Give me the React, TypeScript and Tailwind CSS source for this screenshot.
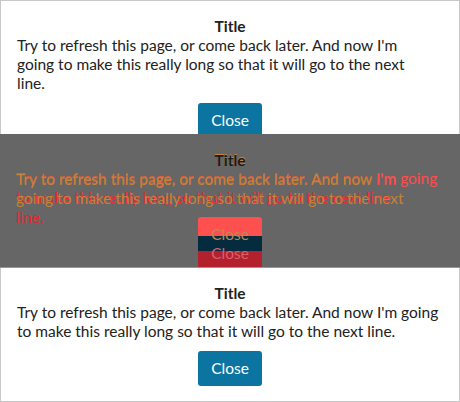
const BODY =
  "Try to refresh this page, or come back later. And now I'm going to make this really long so that it will go to the next line.";

function Panel({ narrow }: { narrow?: boolean }) {
  return (
    <>
      <p className="text-center font-bold leading-[19px]">Title</p>
      <div className={narrow ? 'pr-4' : ''}>
        <p className="leading-[19px]">{BODY}</p>
      </div>
      <div className="mt-[10px] flex justify-center">
        <button className="h-[35px] w-16 rounded-[3px] bg-[#0b74a1] text-white">Close</button>
      </div>
    </>
  );
}

export default function App() {
  return (
    <div className="w-[460px] font-['Lato',sans-serif] text-[15.5px] text-[#222]">
      {/* expected */}
      <div className="h-[134px] overflow-hidden border border-b-0 border-[#c8c8c8] bg-white px-4 pt-4">
        <Panel narrow />
      </div>

      {/* diff */}
      <div className="relative h-[134px] overflow-hidden border-b border-[#ff6b6b] bg-[#666]">
        {/* actual layer */}
        <div className="absolute inset-x-0 top-0 px-4 pt-4 text-[#ee2a32]">
          <p className="text-center font-bold leading-[19px] text-[#c8853a]">Title</p>
          <p className="leading-[19px]">
            <span className="text-[#d8603a]">Try to refresh this page, or come back later. And now</span>{' '}
            <span className="text-[#ff4d4d]">I'm going</span> to make this really long so that it will go to the next
            line.
          </p>
        </div>
        {/* expected layer */}
        <div className="absolute inset-x-0 top-0 px-4 pt-[17px] text-[#c4823a]">
          <p className="text-center font-bold leading-[19px] text-[#1a1a1a]">Title</p>
          <div className="pr-4">
            <p className="leading-[19px]">
              Try to refresh this page, or come back later. And now <span className="text-[#ff4d4d]">I'm</span> going
              to make this really long so that it will go to the next <span className="text-[#e0262e]">line.</span>
            </p>
          </div>
        </div>
        {/* button diff */}
        <div className="absolute left-[198px] top-[83px] flex h-[50px] w-16 flex-col overflow-hidden rounded-t-[3px]">
          <div className="h-[19px] bg-[#ff5050]" />
          <div className="h-[15px] bg-[#052b3e]" />
          <div className="flex-1 bg-[#b3202e]" />
          <span className="absolute inset-x-0 top-[8px] text-center leading-[19px] text-[#c08850]">Close</span>
          <span className="absolute inset-x-0 top-[27px] text-center leading-[19px] text-[#d8606a]">Close</span>
        </div>
      </div>

      {/* actual */}
      <div className="h-[134px] overflow-hidden border border-t-0 border-[#c8c8c8] bg-white px-4 pt-4">
        <Panel />
      </div>
    </div>
  );
}
